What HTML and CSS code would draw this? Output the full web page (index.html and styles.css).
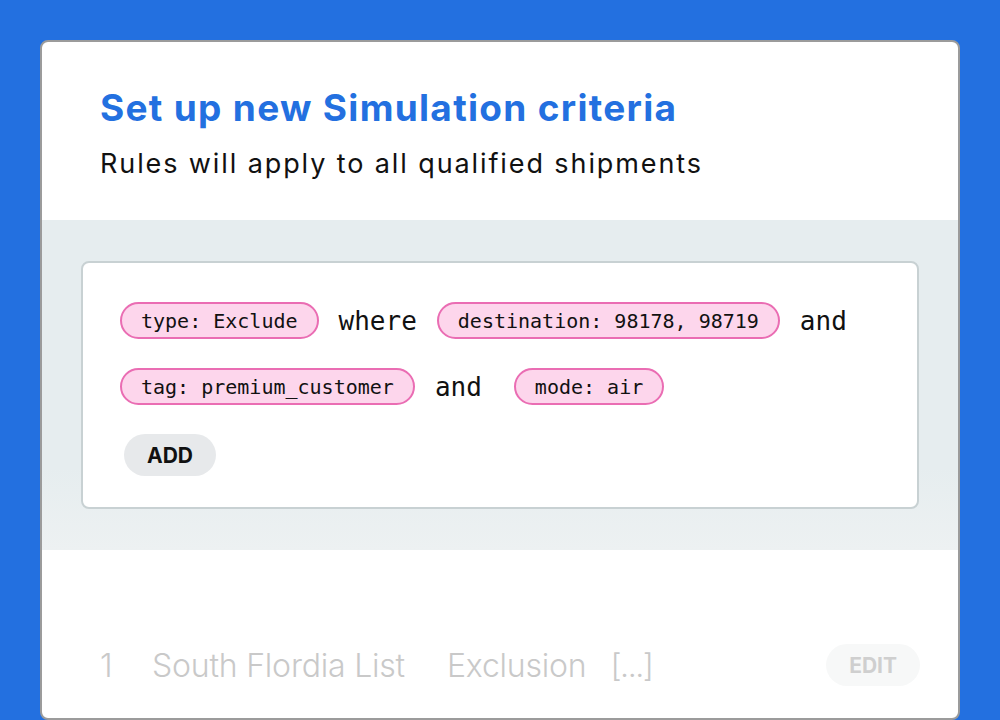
FILE: index.html
```html
<!DOCTYPE html>
<html lang="en">
<head>
<meta charset="UTF-8">
<meta name="viewport" content="width=device-width, initial-scale=1.0">
<title>Simulation criteria</title>
<link rel="stylesheet" href="styles.css">
</head>
<body>

<div class="card">
    <div class="card-header">
        <h1>Set up new Simulation criteria</h1>
        <p>Rules will apply to all qualified shipments</p>
    </div>

    <div class="criteria-section">
        <div class="criteria-box">
            <div class="rule-row">
                <span class="chip">type: Exclude</span>
                <span class="joiner">where</span>
                <span class="chip">destination: 98178, 98719</span>
                <span class="joiner">and</span>
            </div>
            <div class="rule-row">
                <span class="chip">tag: premium_customer</span>
                <span class="joiner joiner-wide">and</span>
                <span class="chip">mode: air</span>
            </div>
            <button type="button" class="pill-btn">ADD</button>
        </div>
    </div>

    <div class="list-row">
        <span class="num">1</span>
        <span class="name">South Flordia List</span>
        <span class="kind">Exclusion</span>
        <span class="more">[...]</span>
        <button type="button" class="pill-btn edit-btn">EDIT</button>
    </div>
</div>

</body>
</html>
```

FILE: styles.css
```css
body {
    margin: 0;
    padding: 40px 40px 0;
    background-color: #2370e0;
    font-family: Inter, "Open Sans", sans-serif;
    height: 720px;
    box-sizing: border-box;
    overflow: hidden;
}

.card {
    height: 680px;
    box-sizing: border-box;
    background-color: #fff;
    border: 2px solid #9b9b9b;
    border-radius: 8px;
    overflow: hidden;
}

.card-header {
    padding: 44px 58px 0;
    height: 178px;
    box-sizing: border-box;
}

.card-header h1 {
    margin: 0;
    font-size: 37px;
    font-weight: 700;
    color: #2370e0;
    line-height: 44px;
    letter-spacing: 1.3px;
}

.card-header p {
    margin: 18px 0 0;
    font-size: 27px;
    color: #111;
    line-height: 32px;
    letter-spacing: 1.9px;
}

.criteria-section {
    background: linear-gradient(#e6edef 75%, #edf1f2);
    padding: 41px 39px;
}

.criteria-box {
    background-color: #fff;
    border: 2px solid #c8d1d3;
    border-radius: 8px;
    height: 248px;
    box-sizing: border-box;
    padding: 39px 37px 0;
}

.rule-row {
    display: flex;
    align-items: center;
    gap: 20px;
    margin-bottom: 29px;
}

.chip {
    font-family: "DejaVu Sans Mono", monospace;
    font-size: 20px;
    color: #111;
    background-color: #fdd6ec;
    border: 2px solid #ea6db3;
    border-radius: 20px;
    height: 37px;
    box-sizing: border-box;
    padding: 0 19px;
    display: flex;
    align-items: center;
}

.joiner {
    font-family: "DejaVu Sans Mono", monospace;
    font-size: 26px;
    color: #111;
}

.joiner-wide {
    margin-right: 12px;
}

.pill-btn {
    font-family: Inter, sans-serif;
    font-size: 21px;
    font-weight: 700;
    color: #111;
    background-color: #e7e9eb;
    border: none;
    border-radius: 21px;
    height: 42px;
    padding: 0 23px;
    margin-left: 4px;
}

.list-row {
    display: flex;
    align-items: center;
    padding: 94px 38px 0 58px;
    font-size: 32px;
    font-weight: 300;
    color: #c9c9c9;
    letter-spacing: -0.2px;
}

.list-row .num {
    width: 52px;
}

.list-row .name {
    margin-right: 42px;
}

.list-row .kind {
    margin-right: 24px;
}

.list-row .more {
    letter-spacing: -1.5px;
}

.edit-btn {
    margin-left: auto;
    color: #cfcfcf;
    background-color: #f7f8f8;
    letter-spacing: 0;
}
```
